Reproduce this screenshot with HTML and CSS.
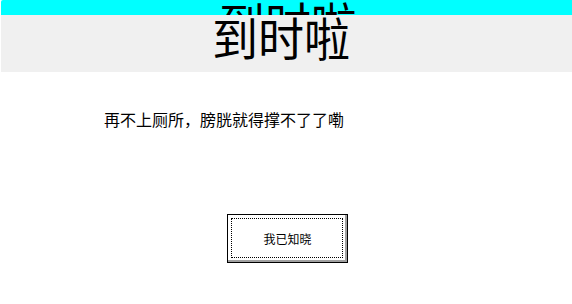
FILE: index.html
```html
<!DOCTYPE html>
<html lang="zh-CN">
<head>
<meta charset="utf-8">
<title>到时啦</title>
<link rel="stylesheet" href="styles.css">
</head>
<body>
<div class="header">
  <div class="topbar"><span class="title ghost">到时啦</span></div>
  <div class="band"><span class="title">到时啦</span></div>
</div>
<p class="message">再不上厕所，膀胱就得撑不了了嘞</p>
<div class="actions">
  <button class="ok" type="button">我已知晓</button>
</div>
</body>
</html>
```

FILE: styles.css
```css
html, body {
  margin: 0;
  padding: 0;
  background: #ffffff;
  font-family: "Noto Sans CJK SC", "Noto Sans", sans-serif;
  color: #000000;
}

.header {
  margin-left: 1px;
}

.topbar {
  height: 15px;
  overflow: hidden;
  background: #00ffff;
  border-top-left-radius: 2px;
  padding-left: 218px;
}

.band {
  height: 57px;
  background: #f0f0f0;
  padding-left: 211px;
}

.title {
  display: block;
  font-size: 46px;
  line-height: 42px;
  white-space: nowrap;
}

.message {
  margin: 39px 0 0 104px;
  font-size: 16px;
  line-height: 16px;
  white-space: nowrap;
}

.actions {
  margin-top: 87px;
  padding-left: 227px;
}

.ok {
  position: relative;
  width: 121px;
  height: 49px;
  margin: 0;
  padding: 0;
  border: 1px solid #000000;
  border-radius: 0;
  background: #ffffff;
  box-shadow: inset -2px -2px 0 #a0a0a0, inset 1px 1px 0 #ffffff;
  font-family: "Noto Sans CJK SC", "Noto Sans", sans-serif;
  font-size: 12px;
  line-height: 12px;
  color: #000000;
}

.ok::after {
  content: "";
  position: absolute;
  left: 3px;
  top: 3px;
  right: 4px;
  bottom: 4px;
  border: 1px dotted #000000;
}
```
